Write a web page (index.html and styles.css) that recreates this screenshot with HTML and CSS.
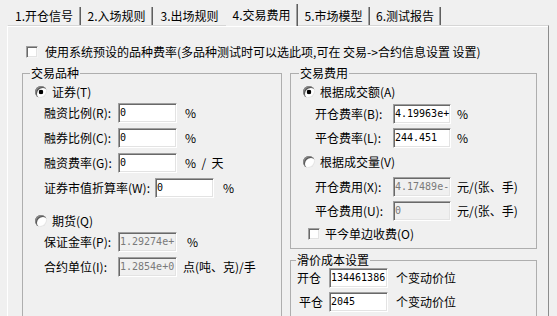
FILE: index.html
```html
<!DOCTYPE html>
<html lang="zh-CN">
<head>
  <meta charset="UTF-8" />
  <title>交易费用</title>
  <link rel="stylesheet" href="styles.css">
</head>
<body>

  <div class="tabs">
    <div class="tab tab-first">1.开仓信号</div>
    <div class="tab">2.入场规则</div>
    <div class="tab tab-before">3.出场规则</div>
    <div class="tab active">4.交易费用</div>
    <div class="tab">5.市场模型</div>
    <div class="tab tab-last">6.测试报告</div>
  </div>

  <div class="panel">
    <div class="check-row"><span class="check"></span>使用系统预设的品种费率(多品种测试时可以选此项,可在 交易->合约信息设置 设置)</div>

    <div class="columns">
      <fieldset class="group group-goods">
        <legend>交易品种</legend>
        <div class="opt"><span class="radio on"></span>证券(T)</div>
        <div class="field"><span class="lbl">融资比例(R):</span><span class="input">0</span><span class="unit">%</span></div>
        <div class="field"><span class="lbl">融券比例(C):</span><span class="input">0</span><span class="unit">%</span></div>
        <div class="field"><span class="lbl">融资费率(G):</span><span class="input">0</span><span class="unit">%&nbsp;&nbsp;/&nbsp;&nbsp;天</span></div>
        <div class="field"><span class="lbl lbl-wide">证券市值折算率(W):</span><span class="input">0</span><span class="unit unit-wide">%</span></div>
        <div class="opt opt-future"><span class="radio"></span>期货(Q)</div>
        <div class="field"><span class="lbl">保证金率(P):</span><span class="input off">1.29274e+</span><span class="unit unit-margin">%</span></div>
        <div class="field"><span class="lbl">合约单位(I):</span><span class="input off">1.2854e+0</span><span class="unit unit-lot">点(吨、克)/手</span></div>
      </fieldset>

      <div class="right-col">
        <fieldset class="group group-fee">
          <legend>交易费用</legend>
          <div class="opt"><span class="radio on"></span>根据成交额(A)</div>
          <div class="field"><span class="lbl">开仓费率(B):</span><span class="input">4.19963e+</span><span class="unit">%</span></div>
          <div class="field"><span class="lbl">平仓费率(L):</span><span class="input">244.451</span><span class="unit">%</span></div>
          <div class="opt opt-volume"><span class="radio"></span>根据成交量(V)</div>
          <div class="field"><span class="lbl">开仓费用(X):</span><span class="input off">4.17489e-</span><span class="unit">元/(张、手)</span></div>
          <div class="field"><span class="lbl">平仓费用(U):</span><span class="input off">0</span><span class="unit">元/(张、手)</span></div>
          <div class="check-row check-today"><span class="check"></span>平今单边收费(O)</div>
        </fieldset>

        <fieldset class="group group-slip">
          <legend>滑价成本设置</legend>
          <div class="field"><span class="lbl">开仓</span><span class="input">134461386</span><span class="unit">个变动价位</span></div>
          <div class="field"><span class="lbl lbl-close">平仓</span><span class="input">2045</span><span class="unit">个变动价位</span></div>
        </fieldset>
      </div>
    </div>
  </div>

</body>
</html>
```

FILE: styles.css
```css
body {
  margin: 0;
  height: 316px;
  overflow: hidden;
  background-color: #f0f0f0;
  color: #000000;
  font-family: "Noto Sans CJK SC", sans-serif;
  font-size: 12px;
  line-height: 16px;
}

/* tab strip */
.tabs {
  display: flex;
  align-items: flex-end;
  height: 25px;
  padding-left: 8px;
}

.tab {
  width: 72px;
  height: 18px;
  line-height: 18px;
  box-sizing: border-box;
  text-align: center;
  border-right: 1px solid #5f5f5f;
  box-shadow: inset -1px 0 #a0a0a0;
}

.tab-first { width: 73px; }
.tab-last  { width: 71px; }

.tab-before {
  width: 73px;
  border-right: none;
  box-shadow: none;
}

.tab.active {
  height: 22px;
  line-height: 21px;
  margin-bottom: -1px;
  position: relative;
  z-index: 1;
  background-color: #f0f0f0;
}

/* page body */
.panel {
  margin-left: 7px;
  width: 542px;
  height: 300px;
  box-sizing: border-box;
  padding: 18px 0 0 14px;
  border-top: 1px solid #d6d6d6;
  border-left: 1px solid #ffffff;
  border-right: 1px solid #8c8c8c;
  box-shadow: inset 0 1px #ffffff;
}

.check-row {
  display: flex;
  align-items: center;
  height: 15px;
  padding-left: 4px;
}

.check {
  width: 12px;
  height: 12px;
  box-sizing: border-box;
  margin-right: 7px;
  background-color: #ffffff;
  border: 1px solid;
  border-color: #a0a0a0 #f4f4f4 #f4f4f4 #a0a0a0;
  box-shadow: inset 1px 1px #696969, inset -1px -1px #e3e3e3;
}

.columns {
  display: flex;
  gap: 8px;
  margin-top: 6px;
}

.group {
  margin: 0;
  padding: 3px 0 0 0;
  border: 1px solid #aeaeae;
}

.group legend {
  margin-left: 7px;
  padding: 0 1px;
  line-height: 16px;
}

.group-goods {
  width: 260px;
  height: 262px;
  box-sizing: border-box;
}

.right-col {
  display: flex;
  flex-direction: column;
  gap: 3px;
  width: 247px;
}

.group-fee {
  padding-bottom: 6px;
}

.group-fee legend { margin-left: 8px; }

.group-slip {
  height: 80px;
  box-sizing: border-box;
  padding-top: 0;
}

.group-slip legend { margin-left: 5px; }

/* radio options */
.opt {
  display: flex;
  align-items: center;
  height: 16px;
  padding-left: 12px;
}

.radio {
  width: 12px;
  height: 12px;
  margin-right: 5px;
  border-radius: 50%;
  background: #ffffff;
  box-shadow: inset 1px 1px #8a8a8a, inset 2px 2px #5a5a5a, inset -1px -1px #e6e6e6;
}

.radio.on {
  background: radial-gradient(circle, #000000 2px, #ffffff 2.6px);
}

/* label + edit rows */
.field {
  display: flex;
  align-items: center;
  height: 20px;
  margin-top: 5px;
}

.opt + .field { margin-top: 3px; }
.field + .opt { margin-top: 15px; }

.lbl {
  width: 74px;
  margin-left: 21px;
  white-space: nowrap;
}

.lbl-wide { width: 111px; }

.input {
  width: 59px;
  height: 20px;
  box-sizing: border-box;
  padding-left: 1px;
  overflow: hidden;
  white-space: nowrap;
  background-color: #ffffff;
  border: 1px solid;
  border-color: #a0a0a0 #ffffff #ffffff #a0a0a0;
  box-shadow: inset 1px 1px #696969, inset -1px -1px #e3e3e3;
  font-family: "DejaVu Sans Mono", monospace;
  font-size: 10px;
  line-height: 17px;
}

.input.off {
  background-color: #f0f0f0;
  color: #7a7a7a;
}

.unit {
  margin-left: 8px;
  white-space: nowrap;
}

.unit-wide   { margin-left: 9px; }
.unit-margin { margin-left: 10px; }
.unit-lot    { margin-left: 6px; }

/* fee group */
.group-fee .lbl {
  width: 78px;
  margin-left: 24px;
}

.group-fee .input { width: 58px; }
.group-fee .unit  { margin-left: 6px; }
.group-fee .opt + .field { margin-top: 4px; }
.group-fee .field + .opt { margin-top: 6px; }
.group-fee .opt-volume + .field { margin-top: 7px; }
.group-fee .field + .field { margin-top: 4px; }

.check-today {
  height: 16px;
  margin-top: 5px;
  padding-left: 17px;
}

.check-today .check { margin-right: 5px; }

/* slippage group */
.group-slip .field:first-of-type { margin-top: 0; }
.group-slip .field + .field { margin-top: 4px; }

.group-slip .lbl {
  width: 32px;
  margin-left: 6px;
}

.group-slip .lbl-close {
  width: 30px;
  margin-left: 8px;
}
```
